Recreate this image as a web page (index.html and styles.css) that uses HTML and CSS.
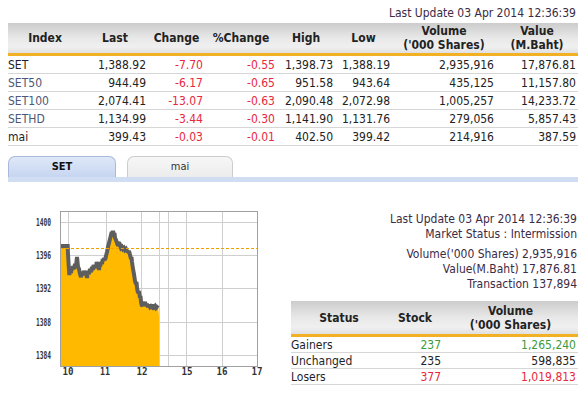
FILE: index.html
```html
<!DOCTYPE html>
<html>
<head>
<meta charset="utf-8">
<link rel="stylesheet" href="styles.css">
</head>
<body>
<div class="page">
  <div class="update">Last Update 03 Apr 2014 12:36:39</div>
  <table class="idx">
    <colgroup>
      <col style="width:74px"><col style="width:66px"><col style="width:57px"><col style="width:72px">
      <col style="width:58px"><col style="width:57px"><col style="width:104px"><col style="width:82px">
    </colgroup>
    <thead>
      <tr><th>Index</th><th>Last</th><th>Change</th><th>%Change</th><th>High</th><th>Low</th><th>Volume<br>('000 Shares)</th><th>Value<br>(M.Baht)</th></tr>
    </thead>
    <tbody>
      <tr><td class="name">SET</td><td>1,388.92</td><td class="neg">-7.70</td><td class="neg">-0.55</td><td>1,398.73</td><td>1,388.19</td><td>2,935,916</td><td>17,876.81</td></tr>
      <tr><td class="name link">SET50</td><td>944.49</td><td class="neg">-6.17</td><td class="neg">-0.65</td><td>951.58</td><td>943.64</td><td>435,125</td><td>11,157.80</td></tr>
      <tr><td class="name link">SET100</td><td>2,074.41</td><td class="neg">-13.07</td><td class="neg">-0.63</td><td>2,090.48</td><td>2,072.98</td><td>1,005,257</td><td>14,233.72</td></tr>
      <tr><td class="name link">SETHD</td><td>1,134.99</td><td class="neg">-3.44</td><td class="neg">-0.30</td><td>1,141.90</td><td>1,131.76</td><td>279,056</td><td>5,857.43</td></tr>
      <tr><td class="name">mai</td><td>399.43</td><td class="neg">-0.03</td><td class="neg">-0.01</td><td>402.50</td><td>399.42</td><td>214,916</td><td>387.59</td></tr>
    </tbody>
  </table>

  <div class="tabs">
    <div class="tab active">SET</div>
    <div class="tab">mai</div>
  </div>
  <div class="tabbar"></div>

  <div class="bottom">
    <svg class="chart" width="291" height="190" viewBox="0 0 291 190">
      <g stroke="#cfcfcf" stroke-width="1">
        <line x1="61" y1="20.5" x2="258" y2="20.5"/>
        <line x1="61" y1="53.5" x2="258" y2="53.5"/>
        <line x1="61" y1="86.5" x2="258" y2="86.5"/>
        <line x1="61" y1="120.5" x2="258" y2="120.5"/>
        <line x1="61" y1="153.5" x2="258" y2="153.5"/>
        <line x1="68.5" y1="9" x2="68.5" y2="164"/>
        <line x1="106.5" y1="9" x2="106.5" y2="164"/>
        <line x1="141.5" y1="9" x2="141.5" y2="164"/>
        <line x1="159.5" y1="9" x2="159.5" y2="164"/>
        <line x1="168.5" y1="9" x2="168.5" y2="164"/>
        <line x1="186.5" y1="9" x2="186.5" y2="164"/>
        <line x1="222.5" y1="9" x2="222.5" y2="164"/>
      </g>
      <rect x="60.5" y="9.5" width="197" height="155" fill="none" stroke="#a0a0a0" stroke-width="1"/>
      <polygon fill="#ffba00" points="61,44.5 67.7,44.5 68,52 68.6,62 69.3,73 70,69 71,71 71.5,66 72.5,68 73,64 74,67 75,62 76,64 77,55 77.5,60 78,65 79,67 80,72 81,75 82,70 83,73 84,69 85,72 86,70 87,76 87.5,71 88,69 89,72 90,67 91,70 92,65 93,68 93.5,63 94.5,66 95,64 96,66 96.7,60 97.5,64 98,62 99,68 99.5,64 100.5,63 101,60 102,62 102.7,57 103.5,59 104,56 105,58 106,54 107,50 108,45 109,41 110,37 111,33 111.7,30 112.5,31 113,29 114,33 114.5,31 115,36 116,38 117,41 118,40 119,44 120,43 121,46 122,45 123,47 124,46 125,48 126,47 127,49 128.3,50 129,49 130,53 131,57 131.5,55 132,60 133,67 134,72 135,79 136,82 136.5,80 137,86 138,91 139,89 140,96 140.5,94 141,100 141.7,103 142.5,104 143,101 144,103 145,100 146,104 147,102 148,105 149,103 150,105 151,104 152,105 153,103 154,105 155,104 156,106 157,105 158.3,106 159,114 159,164 61,164"/>
      <polyline fill="none" stroke="#5e5e5e" stroke-width="4" stroke-linejoin="miter" stroke-miterlimit="2" points="61,44 67.7,44 68,52 68.6,62 69.3,73 70,69 71,71 71.5,66 72.5,68 73,64 74,67 75,62 76,64 77,55 77.5,60 78,65 79,67 80,72 81,75 82,70 83,73 84,69 85,72 86,70 87,76 87.5,71 88,69 89,72 90,67 91,70 92,65 93,68 93.5,63 94.5,66 95,64 96,66 96.7,60 97.5,64 98,62 99,68 99.5,64 100.5,63 101,60 102,62 102.7,57 103.5,59 104,56 105,58 106,54 107,50 108,45 109,41 110,37 111,33 111.7,30 112.5,31 113,29 114,33 114.5,31 115,36 116,38 117,41 118,40 119,44 120,43 121,46 122,45 123,47 124,46 125,48 126,47 127,49 128.3,50 129,49 130,53 131,57 131.5,55 132,60 133,67 134,72 135,79 136,82 136.5,80 137,86 138,91 139,89 140,96 140.5,94 141,100 141.7,103 142.5,104 143,101 144,103 145,100 146,104 147,102 148,105 149,103 150,105 151,104 152,105 153,103 154,105 155,104 156,106 157,105 158.3,106"/>
      <line x1="61" y1="46.5" x2="258" y2="46.5" stroke="#f0a000" stroke-width="1" stroke-dasharray="3,2"/>
      <g class="ylab" text-anchor="end">
        <text x="51" y="24" textLength="15" lengthAdjust="spacingAndGlyphs">1400</text>
        <text x="51" y="57" textLength="15" lengthAdjust="spacingAndGlyphs">1396</text>
        <text x="51" y="90" textLength="15" lengthAdjust="spacingAndGlyphs">1392</text>
        <text x="51" y="124" textLength="15" lengthAdjust="spacingAndGlyphs">1388</text>
        <text x="51" y="157" textLength="15" lengthAdjust="spacingAndGlyphs">1384</text>
      </g>
      <g class="ylab" text-anchor="middle">
        <text x="68" y="172.5" textLength="11" lengthAdjust="spacingAndGlyphs">10</text>
        <text x="105" y="172.5" textLength="10" lengthAdjust="spacingAndGlyphs">11</text>
        <text x="142" y="172.5" textLength="11" lengthAdjust="spacingAndGlyphs">12</text>
        <text x="187" y="172.5" textLength="11" lengthAdjust="spacingAndGlyphs">15</text>
        <text x="222" y="172.5" textLength="11" lengthAdjust="spacingAndGlyphs">16</text>
        <text x="257" y="172.5" textLength="11" lengthAdjust="spacingAndGlyphs">17</text>
      </g>
    </svg>

    <div class="panel">
      <div class="info">
        <div>Last Update 03 Apr 2014 12:36:39</div>
        <div>Market Status : Intermission</div>
      </div>
      <div class="info second">
        <div>Volume('000 Shares) 2,935,916</div>
        <div>Value(M.Baht) 17,876.81</div>
        <div>Transaction 137,894</div>
      </div>
      <table class="status">
        <colgroup><col style="width:96px"><col style="width:56px"><col style="width:135px"></colgroup>
        <thead>
          <tr><th>Status</th><th>Stock</th><th>Volume<br>('000 Shares)</th></tr>
        </thead>
        <tbody>
          <tr><td class="name">Gainers</td><td class="pos">237</td><td class="pos">1,265,240</td></tr>
          <tr><td class="name">Unchanged</td><td>235</td><td>598,835</td></tr>
          <tr><td class="name">Losers</td><td class="neg">377</td><td class="neg">1,019,813</td></tr>
        </tbody>
      </table>
    </div>
  </div>
</div>
</body>
</html>
```

FILE: styles.css
```css
html, body {
  margin: 0;
  padding: 0;
  background: #ffffff;
}
body {
  font-family: "DejaVu Sans Condensed", "DejaVu Sans", sans-serif;
  font-size: 12px;
  color: #222;
}
.page {
  width: 583px;
}
.update {
  padding-top: 6px;
  line-height: 15px;
  height: 15px;
  text-align: right;
  padding-right: 7px;
  color: #3b2b45;
}
table {
  border-collapse: collapse;
  table-layout: fixed;
}
.idx {
  width: 570px;
  margin: 2px 0 0 8px;
}
th {
  font-weight: bold;
  color: #222;
  text-align: center;
  line-height: 14px;
  padding: 0;
  background: linear-gradient(#cccccc, #e8e8e8 50%, #f0f0f0 80%, #e0e0e0);
  border-bottom: 3px solid #f2b124;
}
.idx th {
  height: 30px;
}
td {
  text-align: right;
  padding: 0 2px 0 0;
  line-height: 14px;
  white-space: nowrap;
  border-bottom: 1px solid #d6d6d6;
}
.idx td {
  height: 17px;
}
td.name {
  text-align: left;
  padding: 0;
  color: #1e1e2a;
}
td.link {
  color: #4c5878;
}
.neg {
  color: #e8283c;
}
.pos {
  color: #3c9a3c;
}
.tabs {
  display: flex;
  gap: 11px;
  margin: 10px 0 0 8px;
  height: 21px;
}
.tab {
  width: 104px;
  height: 20px;
  line-height: 20px;
  text-align: center;
  font-size: 11px;
  border: 1px solid #cccccc;
  border-bottom: none;
  border-radius: 7px 7px 0 0;
  background: linear-gradient(#f6f6f6, #ececec);
  color: #333;
}
.tab.active {
  width: 106px;
  font-weight: bold;
  border-color: #a9b9d9;
  background: linear-gradient(#dfe8f8, #c6d5f0);
  color: #111;
}
.tabbar {
  margin-left: 8px;
  width: 570px;
  height: 5px;
  background: #d1ddf2;
}
.bottom {
  display: flex;
  padding-top: 20px;
}
.chart {
  display: block;
  flex: none;
}
.ylab text {
  font-family: "DejaVu Sans Mono", monospace;
  font-size: 11px;
  font-weight: bold;
  fill: #333;
}
.panel {
  width: 287px;
  padding-top: 10px;
}
.info {
  text-align: right;
  line-height: 15px;
  color: #3b2b45;
  padding-right: 1px;
}
.info.second {
  margin-top: 5px;
}
.status {
  width: 287px;
  margin-top: 9px;
}
.status th {
  height: 33px;
}
.status td {
  height: 15px;
}
```
